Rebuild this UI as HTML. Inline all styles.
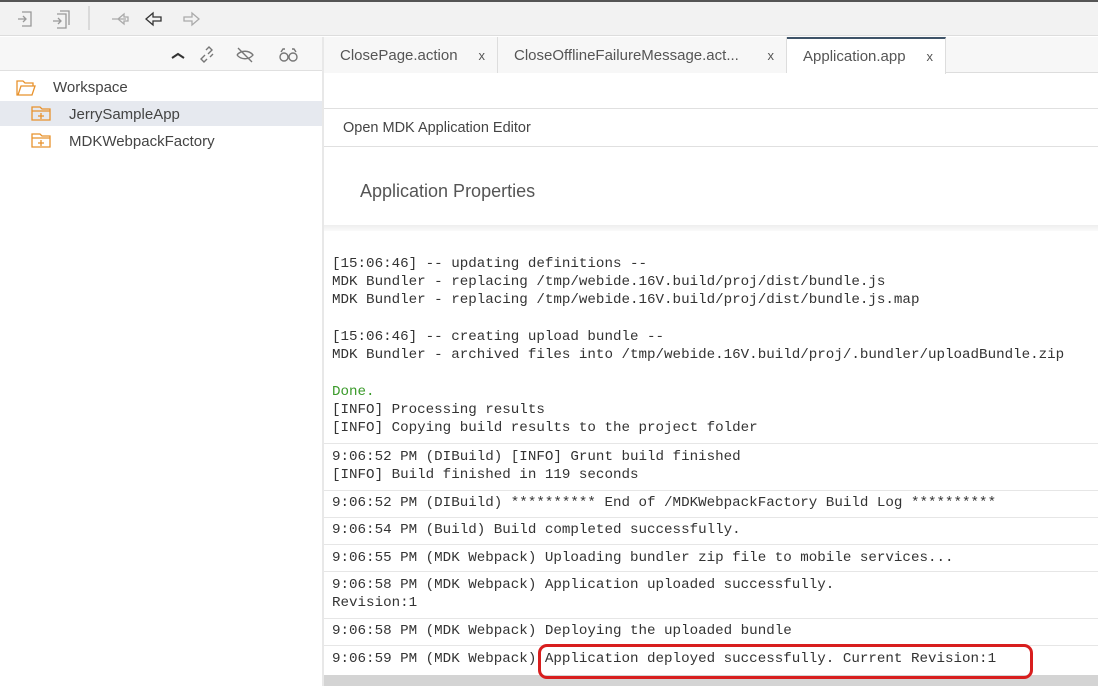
<!DOCTYPE html>
<html><head><meta charset="utf-8"><style>
*{margin:0;padding:0;box-sizing:border-box}
body{width:1098px;height:686px;overflow:hidden;background:#fff;font-family:"Liberation Sans",sans-serif;position:relative}
.a{position:absolute}
.mono{font-family:"Liberation Mono",monospace;font-size:14.2px;line-height:18px;color:#333;white-space:pre}
.sep{position:absolute;left:324px;width:774px;height:1px;background:#e6e6e6}
.tab{position:absolute;top:37px;height:36px;font-size:15px;color:#555;line-height:37px;padding-left:16px;border-right:1px solid #ddd;background:#f7f7f7}
.tab span{position:absolute;right:12px;font-size:13px;color:#555}
</style></head><body>
<div class="a" style="left:0;top:0;width:1098px;height:2px;background:#555"></div>
<div class="a" style="left:0;top:2px;width:1098px;height:34px;background:#f2f2f2;border-bottom:1px solid #ddd"></div>
<svg class="a" style="left:0;top:2px" width="220" height="34" fill="none" stroke-width="1.3">
<g stroke="#999"><path d="M22 10h9v14h-9M18 17h8M23 14l3 3-3 3"/>
<path d="M57 12h9v14h-9M60 9h9v14M53 19h8M58 16l3 3-3 3"/></g>
<path d="M89 4v24" stroke="#ccc"/>
<path d="M118 17l6-5v3h4v4h-4v3z M112 17h14" stroke="#aaa"/>
<path d="M146 17l7-6v4h8v4h-8v4z" stroke="#333"/>
<path d="M199 17l-7-6v4h-8v4h8v4z" stroke="#aaa"/>
</svg>
<div class="a" style="left:0;top:37px;width:322px;height:649px;background:#fff"></div>
<div class="a" style="left:0;top:37px;width:322px;height:34px;background:#f7f7f7;border-bottom:1px solid #e0e0e0"></div>
<svg class="a" style="left:165px;top:42px" width="140" height="26" fill="none" stroke-width="1.4">
<path d="M7 16l6-4 6 4" stroke="#333" stroke-width="2"/>
<g stroke="#777"><path d="M41 8l3-3 3 3-4 4M48 12l-3 3M42 17l-3 3-3-3 4-4"/><path d="M72 13c4-5 12-5 16 0c-4 5-12 5-16 0M73 6l14 14"/>
<circle cx="119" cy="15" r="4"/><circle cx="128" cy="15" r="4"/><path d="M116 10l2-3h2M131 10l-2-3h-2"/></g>
</svg>
<div class="a" style="left:0;top:101px;width:322px;height:25px;background:#e6e9ef"></div>
<svg class="a" style="left:14px;top:78px" width="40" height="75" fill="none" stroke="#e8922c" stroke-width="1.3">
<path d="M3 3h6l2 2h8v3H7l-3 9H3z M4 17l3-9h14l-3 9z"/>
<path d="M18 29h8l2 2h8v11H18z M18 33h18 M27 35v6M24 38h6"/>
<path d="M18 56h8l2 2h8v11H18z M18 60h18 M27 62v6M24 65h6"/>
</svg>
<div class="a" style="left:53px;top:79px;font-size:15px;color:#444">Workspace</div>
<div class="a" style="left:69px;top:106px;font-size:15px;color:#444">JerrySampleApp</div>
<div class="a" style="left:69px;top:133px;font-size:15px;color:#444">MDKWebpackFactory</div>
<div class="a" style="left:322px;top:37px;width:2px;height:649px;background:#e8e8e8"></div>
<div class="a" style="left:324px;top:37px;width:774px;height:36px;background:#f7f7f7;border-bottom:1px solid #ddd"></div>
<div class="tab" style="left:324px;width:174px">ClosePage.action<span>x</span></div>
<div class="tab" style="left:498px;width:289px">CloseOfflineFailureMessage.act...<span>x</span></div>
<div class="tab" style="left:787px;width:159px;background:#fff;border-top:2px solid #3f5469;line-height:35px;height:37px">Application.app<span>x</span></div>
<div class="a" style="left:324px;top:108px;width:774px;height:1px;background:#e0e0e0"></div>
<div class="a" style="left:343px;top:120px;font-size:14.5px;color:#444">Open MDK Application Editor</div>
<div class="a" style="left:324px;top:146px;width:774px;height:1px;background:#e0e0e0"></div>
<div class="a" style="left:360px;top:181px;font-size:18px;color:#555">Application Properties</div>
<div class="a" style="left:324px;top:225px;width:774px;height:6px;background:linear-gradient(#eee,#fafafa)"></div>
<div class="sep" style="top:443px"></div><div class="sep" style="top:490px"></div><div class="sep" style="top:517px"></div><div class="sep" style="top:544px"></div><div class="sep" style="top:571px"></div><div class="sep" style="top:618px"></div><div class="sep" style="top:645px"></div>
<div class="a mono" style="left:332px;top:255px">[15:06:46] -- updating definitions --
MDK Bundler - replacing /tmp/webide.16V.build/proj/dist/bundle.js
MDK Bundler - replacing /tmp/webide.16V.build/proj/dist/bundle.js.map</div>
<div class="a mono" style="left:332px;top:328px">[15:06:46] -- creating upload bundle --
MDK Bundler - archived files into /tmp/webide.16V.build/proj/.bundler/uploadBundle.zip</div>
<div class="a mono" style="left:332px;top:383px"><span style="color:#3a9a2a">Done.</span>
[INFO] Processing results
[INFO] Copying build results to the project folder</div>
<div class="a mono" style="left:332px;top:448px">9:06:52 PM (DIBuild) [INFO] Grunt build finished
[INFO] Build finished in 119 seconds</div>
<div class="a mono" style="left:332px;top:494px">9:06:52 PM (DIBuild) ********** End of /MDKWebpackFactory Build Log **********</div>
<div class="a mono" style="left:332px;top:521px">9:06:54 PM (Build) Build completed successfully.</div>
<div class="a mono" style="left:332px;top:549px">9:06:55 PM (MDK Webpack) Uploading bundler zip file to mobile services...</div>
<div class="a mono" style="left:332px;top:576px">9:06:58 PM (MDK Webpack) Application uploaded successfully.
Revision:1</div>
<div class="a mono" style="left:332px;top:622px">9:06:58 PM (MDK Webpack) Deploying the uploaded bundle</div>
<div class="a mono" style="left:332px;top:650px">9:06:59 PM (MDK Webpack) Application deployed successfully. Current Revision:1</div>
<div class="a" style="left:324px;top:675px;width:774px;height:11px;background:#d4d4d4"></div>
<div class="a" style="left:538px;top:644px;width:495px;height:35px;border:3px solid #d81e1e;border-radius:9px"></div>
</body></html>
